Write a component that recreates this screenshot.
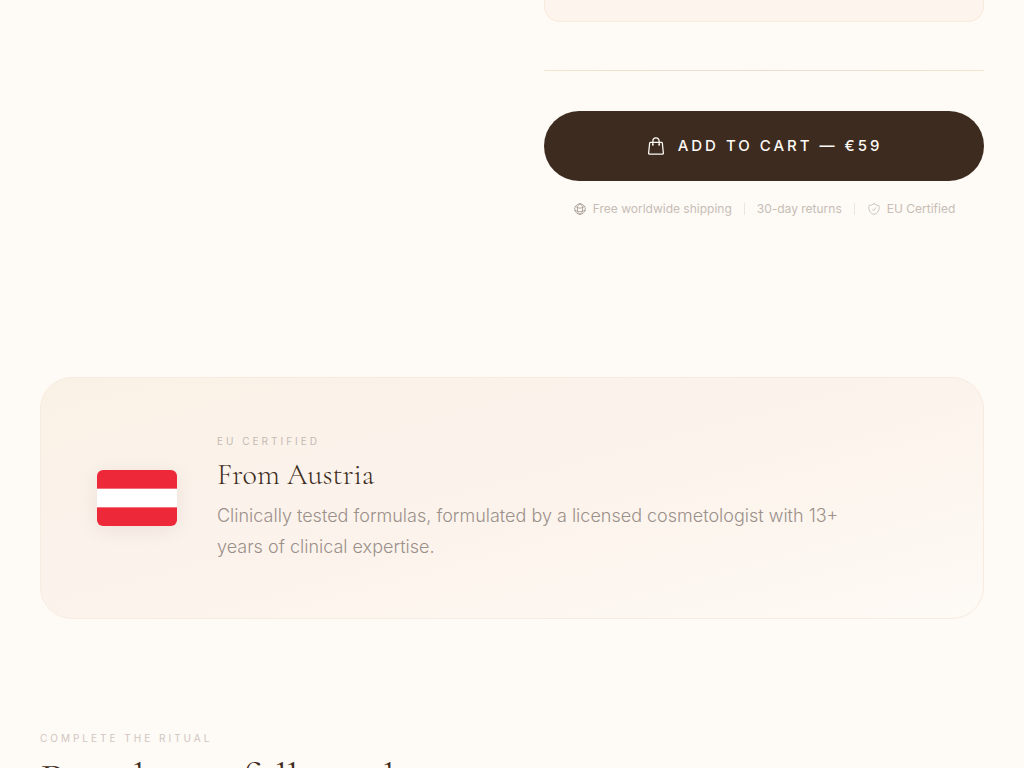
<main class="page">
  <section class="product">
    <div class="details">
      <div class="panel"></div>
      <hr />
      <button class="cart" type="button">
        <svg class="bag" viewBox="0 0 24 24" aria-hidden="true">
          <path d="M15.75 10.5V6a3.75 3.75 0 1 0-7.5 0v4.5m11.356-1.993 1.263 12c.07.665-.45 1.243-1.119 1.243H4.25a1.125 1.125 0 0 1-1.12-1.243l1.264-12A1.125 1.125 0 0 1 5.513 7.5h12.974c.576 0 1.059.435 1.119 1.007ZM8.625 10.5a.375.375 0 1 1-.75 0 .375.375 0 0 1 .75 0Zm7.5 0a.375.375 0 1 1-.75 0 .375.375 0 0 1 .75 0Z" />
        </svg>
        <span>Add to cart — €59</span>
      </button>
      <ul class="perks">
        <li>
          <svg class="globe" viewBox="0 0 24 24" aria-hidden="true">
            <path d="M12 21a9.004 9.004 0 0 0 8.716-6.747M12 21a9.004 9.004 0 0 1-8.716-6.747M12 21c2.485 0 4.5-4.03 4.5-9S14.485 3 12 3m0 18c-2.485 0-4.5-4.03-4.5-9S9.515 3 12 3m0 0a8.997 8.997 0 0 1 7.843 4.582M12 3a8.997 8.997 0 0 0-7.843 4.582m15.686 0A11.953 11.953 0 0 1 12 10.5c-2.998 0-5.74-1.1-7.843-2.918m15.686 0A8.959 8.959 0 0 1 21 12c0 .778-.099 1.533-.284 2.253m0 0A17.919 17.919 0 0 1 12 16.5c-3.162 0-6.133-.815-8.716-2.247m0 0A9.015 9.015 0 0 1 3 12c0-1.605.42-3.113 1.157-4.418" />
          </svg>
          Free worldwide shipping
        </li>
        <li>30-day returns</li>
        <li>
          <svg viewBox="0 0 24 24" aria-hidden="true">
            <path d="M9 12.75 11.25 15 15 9.75m-3-7.036A11.959 11.959 0 0 1 3.598 6 11.99 11.99 0 0 0 3 9.749c0 5.592 3.824 10.29 9 11.623 5.176-1.332 9-6.03 9-11.622 0-1.31-.21-2.571-.598-3.751h-.152c-3.196 0-6.1-1.248-8.25-3.285Z" />
          </svg>
          EU Certified
        </li>
      </ul>
    </div>
  </section>

  <section class="origin">
    <svg class="flag" viewBox="0 0 80 56" role="img" aria-label="Flag of Austria">
      <rect width="80" height="56" fill="#ed2939" />
      <rect y="18.67" width="80" height="18.67" fill="#fff" />
    </svg>
    <div class="origin-text">
      <p class="eyebrow">EU Certified</p>
      <h2>From Austria</h2>
      <p class="copy">Clinically tested formulas, formulated by a licensed cosmetologist with 13+ years of clinical expertise.</p>
    </div>
  </section>

  <section class="ritual">
    <p class="eyebrow faint">Complete the ritual</p>
    <h2 class="title">Pairs beautifully with</h2>
  </section>
</main>

<style>
  :global(body) {
    background: #fefaf5;
    overflow: hidden;
  }
  .page {
    padding: 0 40px;
    color: #3d2b20;
    font-family: Inter, sans-serif;
  }
  h2,
  p,
  ul {
    margin: 0;
    padding: 0;
  }
  .product {
    display: grid;
    grid-template-columns: 1fr 1fr;
    column-gap: 64px;
  }
  .details {
    grid-column: 2;
  }
  .panel {
    height: 21px;
    border: 1px solid #f9ebdd;
    border-top: 0;
    border-radius: 0 0 16px 16px;
    background: #fdf4ed;
  }
  hr {
    height: 1px;
    margin: 48px 0 40px;
    border: 0;
    background: linear-gradient(90deg, #f3e4cc, #ecdcd0, #f3e4cc);
  }
  .cart {
    display: flex;
    align-items: center;
    justify-content: center;
    gap: 12px;
    width: 100%;
    height: 70px;
    border: 0;
    border-radius: 35px;
    background: #3d2b20;
    color: #fefaf5;
    font: 500 15px/18px Inter, sans-serif;
    letter-spacing: 3px;
    text-transform: uppercase;
  }
  .cart span {
    padding-bottom: 1px;
  }
  .bag {
    width: 20px;
    height: 20px;
  }
  .bag,
  .perks svg {
    fill: none;
    stroke: currentColor;
    stroke-width: 1.5;
    stroke-linecap: round;
    stroke-linejoin: round;
  }
  .perks {
    display: flex;
    justify-content: center;
    margin-top: 20px;
    list-style: none;
    color: #c6bdb7;
    font-size: 12px;
    line-height: 16px;
  }
  .perks li {
    display: flex;
    align-items: center;
    gap: 6px;
  }
  .perks li + li::before {
    content: "";
    width: 1px;
    height: 12px;
    margin: 0 6px 0 12px;
    background: #ece5df;
  }
  .perks svg {
    width: 14px;
    height: 14px;
  }
  .perks .globe {
    color: #a89e97;
  }
  .origin {
    display: flex;
    align-items: center;
    gap: 40px;
    margin-top: 160px;
    padding: 56px;
    border: 1px solid #f8ebdf;
    border-radius: 32px;
    background: linear-gradient(165deg, #faf1e6 0%, #fbf2eb 35%, #fcf4ec 55%, #fdf7f1 80%, #fefaf5 100%);
  }
  .flag {
    flex: none;
    width: 80px;
    height: 56px;
    border-radius: 6px;
    box-shadow: 0 4px 20px rgba(61, 43, 32, 0.08);
  }
  .origin-text {
    max-width: 640px;
  }
  .eyebrow {
    color: #c4bab4;
    font-size: 10px;
    font-weight: 400;
    line-height: 15px;
    letter-spacing: 3px;
    text-transform: uppercase;
  }
  .faint {
    color: #d0c6c1;
  }
  h2 {
    font-family: "Cormorant Garamond", "Liberation Serif", serif;
    font-weight: 300;
  }
  .origin-text h2 {
    margin: 8px 0;
    font-size: 30px;
    line-height: 35px;
  }
  .copy {
    color: #9b908a;
    font-size: 18px;
    font-weight: 300;
    line-height: 31px;
  }
  .ritual {
    margin-top: 112px;
  }
  .title {
    margin-top: 9px;
    font-size: 44px;
    line-height: 52px;
  }
</style>
